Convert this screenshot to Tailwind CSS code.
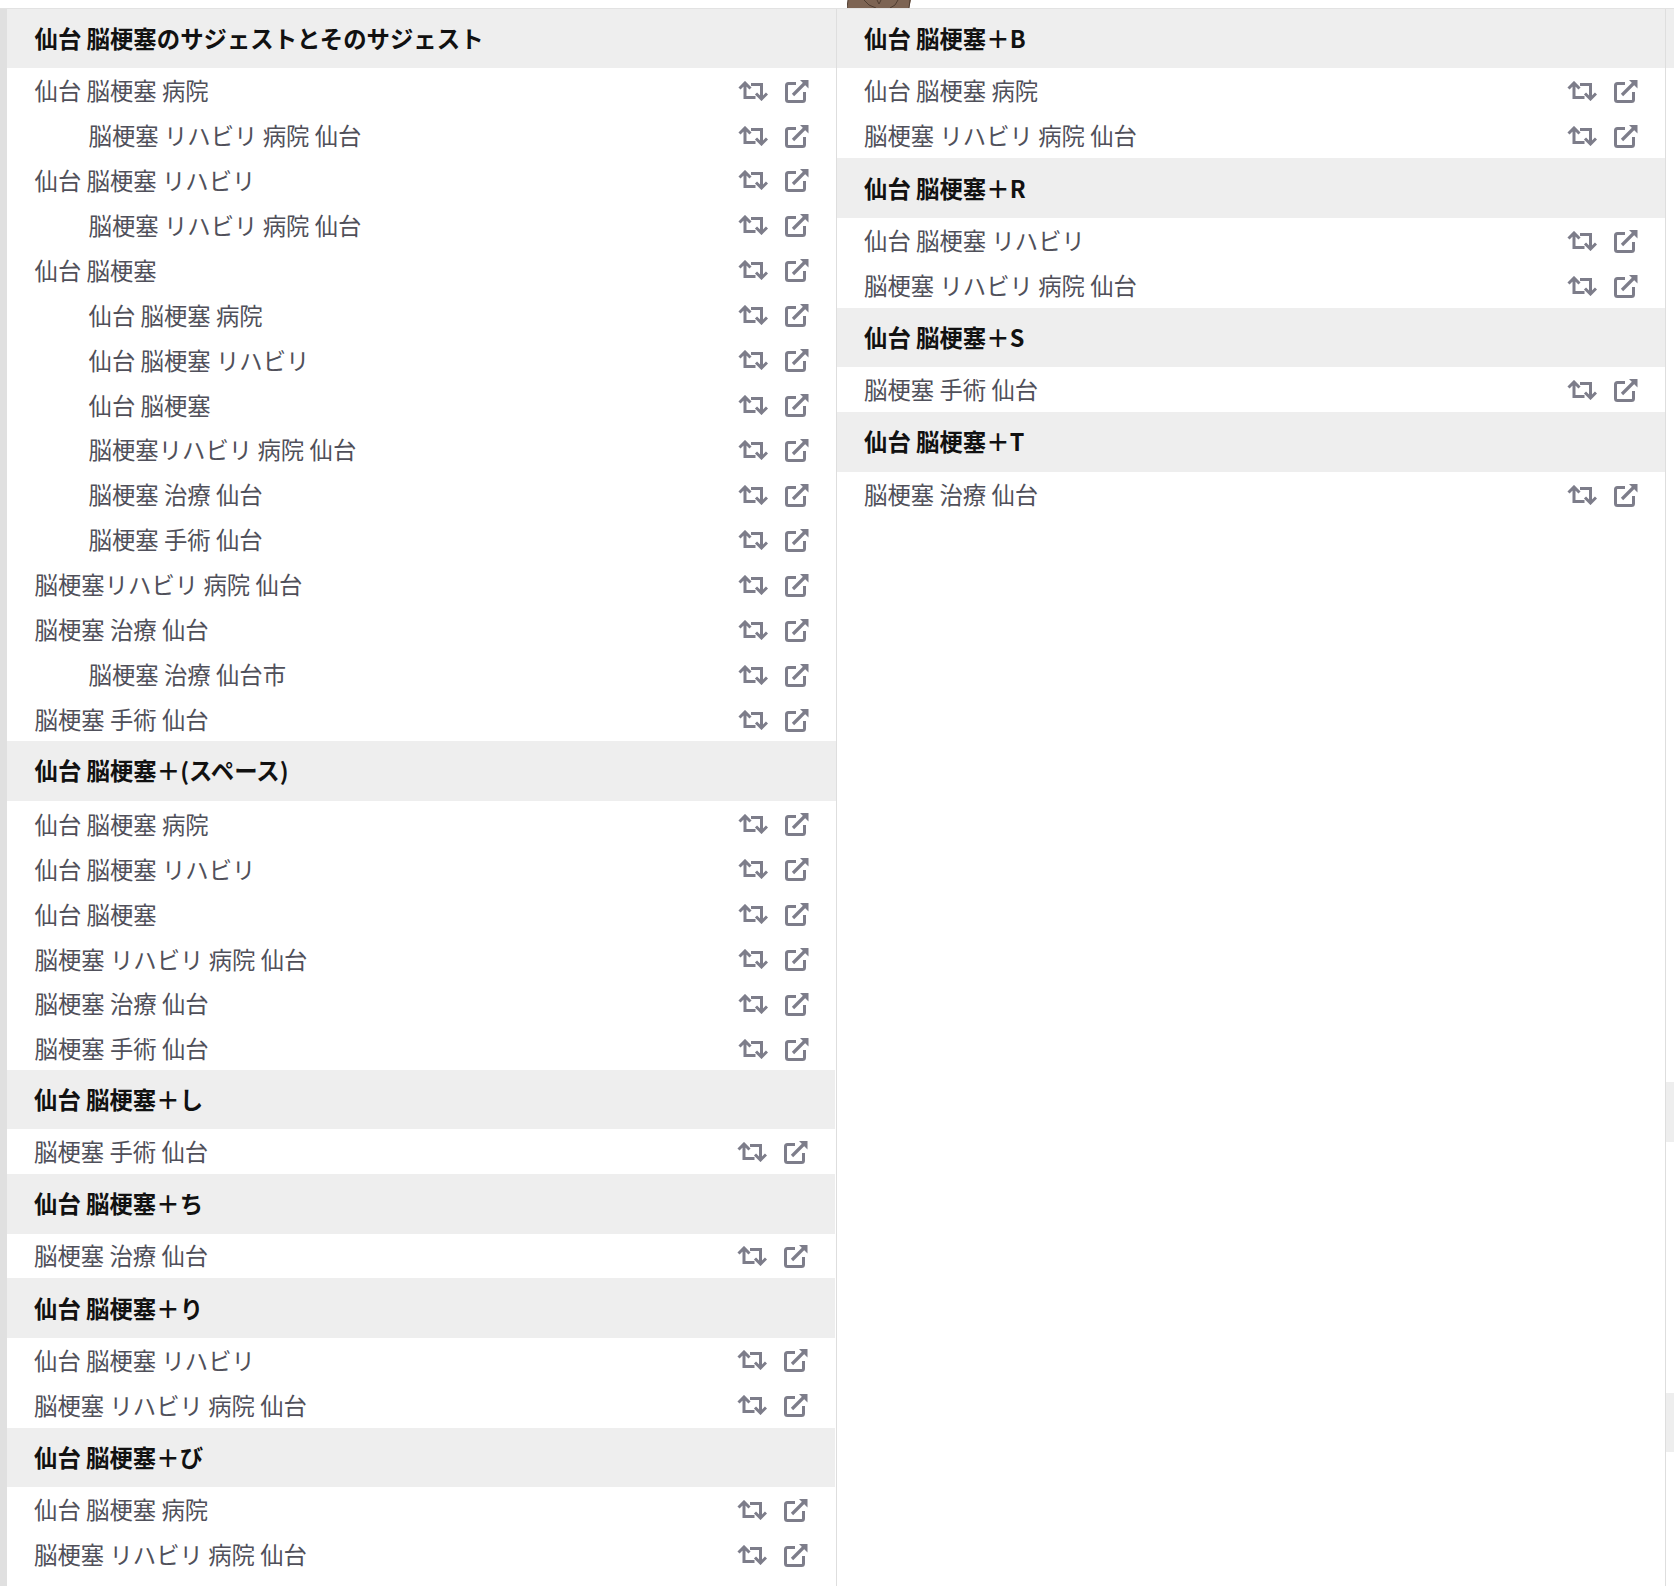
<!DOCTYPE html>
<html lang="ja">
<head>
<meta charset="utf-8">
<title>仙台 脳梗塞のサジェスト</title>
<script src="https://cdn.jsdelivr.net/npm/@tailwindcss/browser@4"></script>
</head>
<body class="bg-white">
<svg class="hidden" width="0" height="0">
  <symbol id="rt" viewBox="0 0 30 20"><path d="M1.500 7.500 7 2l5.500 5.500M7 3v13.500h10.500M13 3.500h10.500V17M18 12.500l5.500 5.500 5.500-5.500" fill="none" stroke="#7d7d8a" stroke-width="3"/></symbol>
  <symbol id="ex" viewBox="0 0 24 24"><path d="M11 4.500H3.500a2 2 0 0 0-2 2v14a2 2 0 0 0 2 2h14a2 2 0 0 0 2-2V13" fill="none" stroke="#7d7d8a" stroke-width="3"/><path d="M8 16 20 4" fill="none" stroke="#7d7d8a" stroke-width="3.200"/><path d="M15 1h8.500v8.500z" fill="#7d7d8a"/></symbol>
</svg>
<div class="relative h-[1586px] w-[1674px] overflow-hidden font-['Noto_Sans_CJK_JP','Noto_Sans',sans-serif] text-[23.4px] text-[#50505a]">
  <div class="h-[9px] border-b border-[#e2e2e2]"></div>
  <svg class="absolute left-[847px] top-0" width="64" height="8" viewBox="0 0 64 8"><path d="M1 0 0 8h62l2-8z" fill="#7d6453"/><path d="M1 0 0 8M63 0 62 8M17 0q4 6 12 8M51 0q-2 6-8 8M30 0l2 4 2-4" fill="none" stroke="#4f3d31" stroke-width="1"/></svg>
  <div class="flex">
    <div class="w-[7px] shrink-0 h-[1577px] bg-[#e0e0e0]"></div>
    <div class="w-[830px] shrink-0 border-r border-[#dedede]">
      <div class="flex h-[59.2px] items-center bg-[#eeeeee] pb-[1px] pl-[27.500px] font-bold text-[#111]">仙台 脳梗塞のサジェストとそのサジェスト</div>
      <div class="flex h-[44.93px] items-center pl-[27.500px] pr-[27px]"><span class="flex-1">仙台 脳梗塞 病院</span><svg class="h-[20px] w-[30px]"><use href="#rt"/></svg><svg class="ml-[17px] h-[24px] w-[24px]"><use href="#ex"/></svg></div>
      <div class="flex h-[44.93px] items-center pl-[81.500px] pr-[27px]"><span class="flex-1">脳梗塞 リハビリ 病院 仙台</span><svg class="h-[20px] w-[30px]"><use href="#rt"/></svg><svg class="ml-[17px] h-[24px] w-[24px]"><use href="#ex"/></svg></div>
      <div class="flex h-[44.93px] items-center pl-[27.500px] pr-[27px]"><span class="flex-1">仙台 脳梗塞 リハビリ</span><svg class="h-[20px] w-[30px]"><use href="#rt"/></svg><svg class="ml-[17px] h-[24px] w-[24px]"><use href="#ex"/></svg></div>
      <div class="flex h-[44.93px] items-center pl-[81.500px] pr-[27px]"><span class="flex-1">脳梗塞 リハビリ 病院 仙台</span><svg class="h-[20px] w-[30px]"><use href="#rt"/></svg><svg class="ml-[17px] h-[24px] w-[24px]"><use href="#ex"/></svg></div>
      <div class="flex h-[44.93px] items-center pl-[27.500px] pr-[27px]"><span class="flex-1">仙台 脳梗塞</span><svg class="h-[20px] w-[30px]"><use href="#rt"/></svg><svg class="ml-[17px] h-[24px] w-[24px]"><use href="#ex"/></svg></div>
      <div class="flex h-[44.93px] items-center pl-[81.500px] pr-[27px]"><span class="flex-1">仙台 脳梗塞 病院</span><svg class="h-[20px] w-[30px]"><use href="#rt"/></svg><svg class="ml-[17px] h-[24px] w-[24px]"><use href="#ex"/></svg></div>
      <div class="flex h-[44.93px] items-center pl-[81.500px] pr-[27px]"><span class="flex-1">仙台 脳梗塞 リハビリ</span><svg class="h-[20px] w-[30px]"><use href="#rt"/></svg><svg class="ml-[17px] h-[24px] w-[24px]"><use href="#ex"/></svg></div>
      <div class="flex h-[44.93px] items-center pl-[81.500px] pr-[27px]"><span class="flex-1">仙台 脳梗塞</span><svg class="h-[20px] w-[30px]"><use href="#rt"/></svg><svg class="ml-[17px] h-[24px] w-[24px]"><use href="#ex"/></svg></div>
      <div class="flex h-[44.93px] items-center pl-[81.500px] pr-[27px]"><span class="flex-1">脳梗塞リハビリ 病院 仙台</span><svg class="h-[20px] w-[30px]"><use href="#rt"/></svg><svg class="ml-[17px] h-[24px] w-[24px]"><use href="#ex"/></svg></div>
      <div class="flex h-[44.93px] items-center pl-[81.500px] pr-[27px]"><span class="flex-1">脳梗塞 治療 仙台</span><svg class="h-[20px] w-[30px]"><use href="#rt"/></svg><svg class="ml-[17px] h-[24px] w-[24px]"><use href="#ex"/></svg></div>
      <div class="flex h-[44.93px] items-center pl-[81.500px] pr-[27px]"><span class="flex-1">脳梗塞 手術 仙台</span><svg class="h-[20px] w-[30px]"><use href="#rt"/></svg><svg class="ml-[17px] h-[24px] w-[24px]"><use href="#ex"/></svg></div>
      <div class="flex h-[44.93px] items-center pl-[27.500px] pr-[27px]"><span class="flex-1">脳梗塞リハビリ 病院 仙台</span><svg class="h-[20px] w-[30px]"><use href="#rt"/></svg><svg class="ml-[17px] h-[24px] w-[24px]"><use href="#ex"/></svg></div>
      <div class="flex h-[44.93px] items-center pl-[27.500px] pr-[27px]"><span class="flex-1">脳梗塞 治療 仙台</span><svg class="h-[20px] w-[30px]"><use href="#rt"/></svg><svg class="ml-[17px] h-[24px] w-[24px]"><use href="#ex"/></svg></div>
      <div class="flex h-[44.93px] items-center pl-[81.500px] pr-[27px]"><span class="flex-1">脳梗塞 治療 仙台市</span><svg class="h-[20px] w-[30px]"><use href="#rt"/></svg><svg class="ml-[17px] h-[24px] w-[24px]"><use href="#ex"/></svg></div>
      <div class="flex h-[44.93px] items-center pl-[27.500px] pr-[27px]"><span class="flex-1">脳梗塞 手術 仙台</span><svg class="h-[20px] w-[30px]"><use href="#rt"/></svg><svg class="ml-[17px] h-[24px] w-[24px]"><use href="#ex"/></svg></div>

      <div class="relative -mt-[1.200px] flex h-[60px] items-center bg-[#eeeeee] pl-[27.500px] font-bold text-[#111]">仙台 脳梗塞＋(スペース)</div>
      <div class="flex h-[44.95px] items-center pl-[27.500px] pr-[27px] pt-[2px]"><span class="flex-1">仙台 脳梗塞 病院</span><svg class="h-[20px] w-[30px]"><use href="#rt"/></svg><svg class="ml-[17px] h-[24px] w-[24px]"><use href="#ex"/></svg></div>
      <div class="flex h-[44.95px] items-center pl-[27.500px] pr-[27px] pt-[2px]"><span class="flex-1">仙台 脳梗塞 リハビリ</span><svg class="h-[20px] w-[30px]"><use href="#rt"/></svg><svg class="ml-[17px] h-[24px] w-[24px]"><use href="#ex"/></svg></div>
      <div class="flex h-[44.95px] items-center pl-[27.500px] pr-[27px] pt-[2px]"><span class="flex-1">仙台 脳梗塞</span><svg class="h-[20px] w-[30px]"><use href="#rt"/></svg><svg class="ml-[17px] h-[24px] w-[24px]"><use href="#ex"/></svg></div>
      <div class="flex h-[44.95px] items-center pl-[27.500px] pr-[27px] pt-[2px]"><span class="flex-1">脳梗塞 リハビリ 病院 仙台</span><svg class="h-[20px] w-[30px]"><use href="#rt"/></svg><svg class="ml-[17px] h-[24px] w-[24px]"><use href="#ex"/></svg></div>
      <div class="flex h-[44.95px] items-center pl-[27.500px] pr-[27px] pt-[2px]"><span class="flex-1">脳梗塞 治療 仙台</span><svg class="h-[20px] w-[30px]"><use href="#rt"/></svg><svg class="ml-[17px] h-[24px] w-[24px]"><use href="#ex"/></svg></div>
      <div class="flex h-[44.95px] items-center pl-[27.500px] pr-[27px] pt-[2px]"><span class="flex-1">脳梗塞 手術 仙台</span><svg class="h-[20px] w-[30px]"><use href="#rt"/></svg><svg class="ml-[17px] h-[24px] w-[24px]"><use href="#ex"/></svg></div>

      <div class="flex h-[59px] items-center bg-[#eeeeee] pl-[27px] mr-[1px] font-bold text-[#111]">仙台 脳梗塞＋し</div>
      <div class="flex h-[44.7px] items-center pl-[27px] pr-[28px]"><span class="flex-1">脳梗塞 手術 仙台</span><svg class="h-[20px] w-[30px]"><use href="#rt"/></svg><svg class="ml-[17px] h-[24px] w-[24px]"><use href="#ex"/></svg></div>
      <div class="flex h-[59.5px] items-center bg-[#eeeeee] pl-[27px] mr-[1px] font-bold text-[#111]">仙台 脳梗塞＋ち</div>
      <div class="flex h-[44.7px] items-center pl-[27px] pr-[28px]"><span class="flex-1">脳梗塞 治療 仙台</span><svg class="h-[20px] w-[30px]"><use href="#rt"/></svg><svg class="ml-[17px] h-[24px] w-[24px]"><use href="#ex"/></svg></div>
      <div class="flex h-[59.5px] items-center bg-[#eeeeee] pl-[27px] mr-[1px] font-bold text-[#111]">仙台 脳梗塞＋り</div>
      <div class="flex h-[44.9px] items-center pl-[27px] pr-[28px]"><span class="flex-1">仙台 脳梗塞 リハビリ</span><svg class="h-[20px] w-[30px]"><use href="#rt"/></svg><svg class="ml-[17px] h-[24px] w-[24px]"><use href="#ex"/></svg></div>
      <div class="flex h-[44.9px] items-center pl-[27px] pr-[28px]"><span class="flex-1">脳梗塞 リハビリ 病院 仙台</span><svg class="h-[20px] w-[30px]"><use href="#rt"/></svg><svg class="ml-[17px] h-[24px] w-[24px]"><use href="#ex"/></svg></div>
      <div class="flex h-[59.5px] items-center bg-[#eeeeee] pl-[27px] mr-[1px] font-bold text-[#111]">仙台 脳梗塞＋び</div>
      <div class="flex h-[45px] items-center pl-[27px] pr-[28px]"><span class="flex-1">仙台 脳梗塞 病院</span><svg class="h-[20px] w-[30px]"><use href="#rt"/></svg><svg class="ml-[17px] h-[24px] w-[24px]"><use href="#ex"/></svg></div>
      <div class="flex h-[45px] items-center pl-[27px] pr-[28px]"><span class="flex-1">脳梗塞 リハビリ 病院 仙台</span><svg class="h-[20px] w-[30px]"><use href="#rt"/></svg><svg class="ml-[17px] h-[24px] w-[24px]"><use href="#ex"/></svg></div>
    </div>
    <div class="w-[829px] shrink-0 border-r border-[#dedede]">
      <div class="flex h-[59.2px] items-center bg-[#eeeeee] pl-[27px] font-bold text-[#111]">仙台 脳梗塞＋B</div>
      <div class="flex h-[44.95px] items-center pl-[27px] pr-[27px]"><span class="flex-1">仙台 脳梗塞 病院</span><svg class="h-[20px] w-[30px]"><use href="#rt"/></svg><svg class="ml-[17px] h-[24px] w-[24px]"><use href="#ex"/></svg></div>
      <div class="flex h-[44.95px] items-center pl-[27px] pr-[27px]"><span class="flex-1">脳梗塞 リハビリ 病院 仙台</span><svg class="h-[20px] w-[30px]"><use href="#rt"/></svg><svg class="ml-[17px] h-[24px] w-[24px]"><use href="#ex"/></svg></div>
      <div class="flex h-[59.5px] items-center bg-[#eeeeee] pt-[1px] pl-[27px] font-bold text-[#111]">仙台 脳梗塞＋R</div>
      <div class="flex h-[45px] items-center pl-[27px] pr-[27px] pt-[1px]"><span class="flex-1">仙台 脳梗塞 リハビリ</span><svg class="h-[20px] w-[30px]"><use href="#rt"/></svg><svg class="ml-[17px] h-[24px] w-[24px]"><use href="#ex"/></svg></div>
      <div class="flex h-[45px] items-center pl-[27px] pr-[27px] pt-[1px]"><span class="flex-1">脳梗塞 リハビリ 病院 仙台</span><svg class="h-[20px] w-[30px]"><use href="#rt"/></svg><svg class="ml-[17px] h-[24px] w-[24px]"><use href="#ex"/></svg></div>
      <div class="flex h-[59.5px] items-center bg-[#eeeeee] pl-[27px] font-bold text-[#111]">仙台 脳梗塞＋S</div>
      <div class="flex h-[45px] items-center pl-[27px] pr-[27px]"><span class="flex-1">脳梗塞 手術 仙台</span><svg class="h-[20px] w-[30px]"><use href="#rt"/></svg><svg class="ml-[17px] h-[24px] w-[24px]"><use href="#ex"/></svg></div>
      <div class="flex h-[59.5px] items-center bg-[#eeeeee] pl-[27px] font-bold text-[#111]">仙台 脳梗塞＋T</div>
      <div class="flex h-[45px] items-center pl-[27px] pr-[27px] pt-[1px]"><span class="flex-1">脳梗塞 治療 仙台</span><svg class="h-[20px] w-[30px]"><use href="#rt"/></svg><svg class="ml-[17px] h-[24px] w-[24px]"><use href="#ex"/></svg></div>
    </div>
    <div class="flex-1">
      <div class="h-[59.2px] bg-[#eeeeee]"></div>
      <div class="mt-[1013.800px] h-[60px] bg-[#eeeeee]"></div>
      <div class="mt-[251px] h-[59px] bg-[#eeeeee]"></div>
    </div>
  </div>
</div>
</body>
</html>
